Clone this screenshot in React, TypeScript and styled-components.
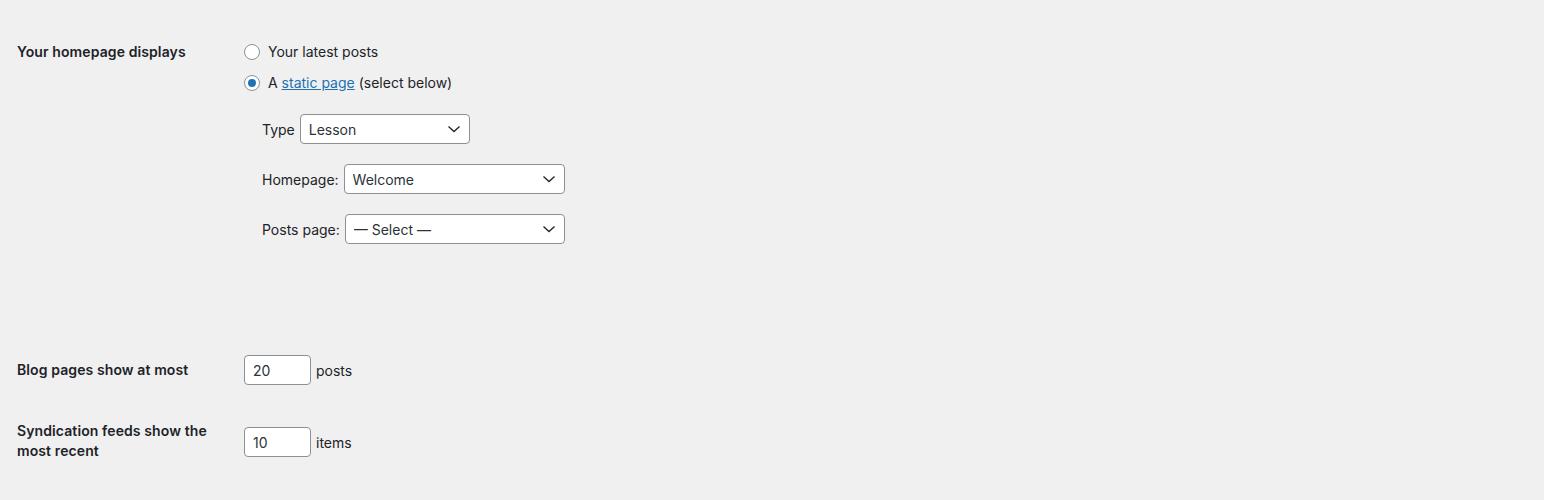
import styled, { createGlobalStyle } from 'styled-components';

let GlobalStyle = createGlobalStyle`
  html, body {
    margin: 0;
    padding: 0;
    background: #f0f0f1;
  }
  body {
    color: #1d2327;
    font-family: Inter, "Open Sans", "Liberation Sans", sans-serif;
    font-size: 14px;
  }
`;

let Page = styled.div`
  padding: 42px 17px 0 17px;
  min-height: 458px;
`;

let Row = styled.div<{ top?: number }>`
  display: grid;
  grid-template-columns: 227px 1fr;
  margin-top: ${p => p.top || 0}px;
`;

let Label = styled.div<{ offset?: number }>`
  font-weight: 600;
  line-height: 20px;
  padding-top: ${p => p.offset || 0}px;
  width: 200px;
  letter-spacing: 0.1px;
`;

let Field = styled.div<{ offset?: number }>`
  display: flex;
  flex-direction: column;
  padding-top: ${p => p.offset || 0}px;
`;

let Options = styled.div`
  display: flex;
  flex-direction: column;
  gap: 11px;
`;

let Option = styled.label`
  display: flex;
  align-items: center;
  gap: 8px;
  height: 20px;
  line-height: 20px;
`;

let Radio = styled.span<{ checked?: boolean }>`
  width: 16px;
  height: 16px;
  box-sizing: border-box;
  border: 1px solid #8c8f94;
  border-radius: 50%;
  background: #fff;
  display: flex;
  align-items: center;
  justify-content: center;

  &::before {
    content: '';
    width: 8px;
    height: 8px;
    border-radius: 50%;
    background: ${p => (p.checked ? '#2271b1' : 'transparent')};
  }
`;

let Link = styled.a`
  color: #2271b1;
  text-decoration: underline;
`;

let SubFields = styled.div`
  display: flex;
  flex-direction: column;
  gap: 20px;
  margin-top: 21px;
  padding-left: 18px;
`;

let SubRow = styled.div`
  display: flex;
  align-items: center;
  gap: 5px;
  height: 30px;
`;

let SelectWrap = styled.div<{ width: number }>`
  position: relative;
  width: ${p => p.width}px;
  height: 30px;
`;

let Select = styled.select`
  appearance: none;
  width: 100%;
  height: 30px;
  box-sizing: border-box;
  border: 1px solid #8c8f94;
  border-radius: 4px;
  background: #fff;
  color: #2c3338;
  font: inherit;
  font-size: 14px;
  padding: 0 24px 0 8px;
  margin: 0;
`;

let Chevron = styled.svg`
  position: absolute;
  right: 8px;
  top: 7px;
  pointer-events: none;
`;

let InlineField = styled.div`
  display: flex;
  align-items: center;
  gap: 5px;
  height: 30px;
`;

let NumberInput = styled.input`
  width: 67px;
  height: 30px;
  box-sizing: border-box;
  border: 1px solid #8c8f94;
  border-radius: 4px;
  background: #fff;
  color: #2c3338;
  font: inherit;
  font-size: 14px;
  padding: 0 8px;
  margin: 0;
`;

let Dropdown = ({ width, value }: { width: number; value: string }) => (
  <SelectWrap width={width}>
    <Select defaultValue={value}>
      <option>{value}</option>
    </Select>
    <Chevron width="16" height="16" viewBox="0 0 16 16" fill="none">
      <polyline points="2.5,5.5 8,10.5 13.5,5.5" stroke="#1d2327" strokeWidth="1.3" />
    </Chevron>
  </SelectWrap>
);

export default function App() {
  return (
    <>
      <GlobalStyle />
      <Page>
        <Row>
          <Label>Your homepage displays</Label>
          <Field>
            <Options>
              <Option>
                <Radio />
                Your latest posts
              </Option>
              <Option>
                <Radio checked />
                <span>
                  A <Link href="#">static page</Link> (select below)
                </span>
              </Option>
            </Options>
            <SubFields>
              <SubRow>
                Type
                <Dropdown width={170} value="Lesson" />
              </SubRow>
              <SubRow>
                Homepage:
                <Dropdown width={221} value="Welcome" />
              </SubRow>
              <SubRow>
                Posts page:
                <Dropdown width={220} value="— Select —" />
              </SubRow>
            </SubFields>
          </Field>
        </Row>

        <Row top={111}>
          <Label offset={5}>Blog pages show at most</Label>
          <Field>
            <InlineField>
              <NumberInput defaultValue="20" />
              posts
            </InlineField>
          </Field>
        </Row>

        <Row top={36}>
          <Label>
            Syndication feeds show the
            <br />
            most recent
          </Label>
          <Field offset={6}>
            <InlineField>
              <NumberInput defaultValue="10" />
              items
            </InlineField>
          </Field>
        </Row>
      </Page>
    </>
  );
}
